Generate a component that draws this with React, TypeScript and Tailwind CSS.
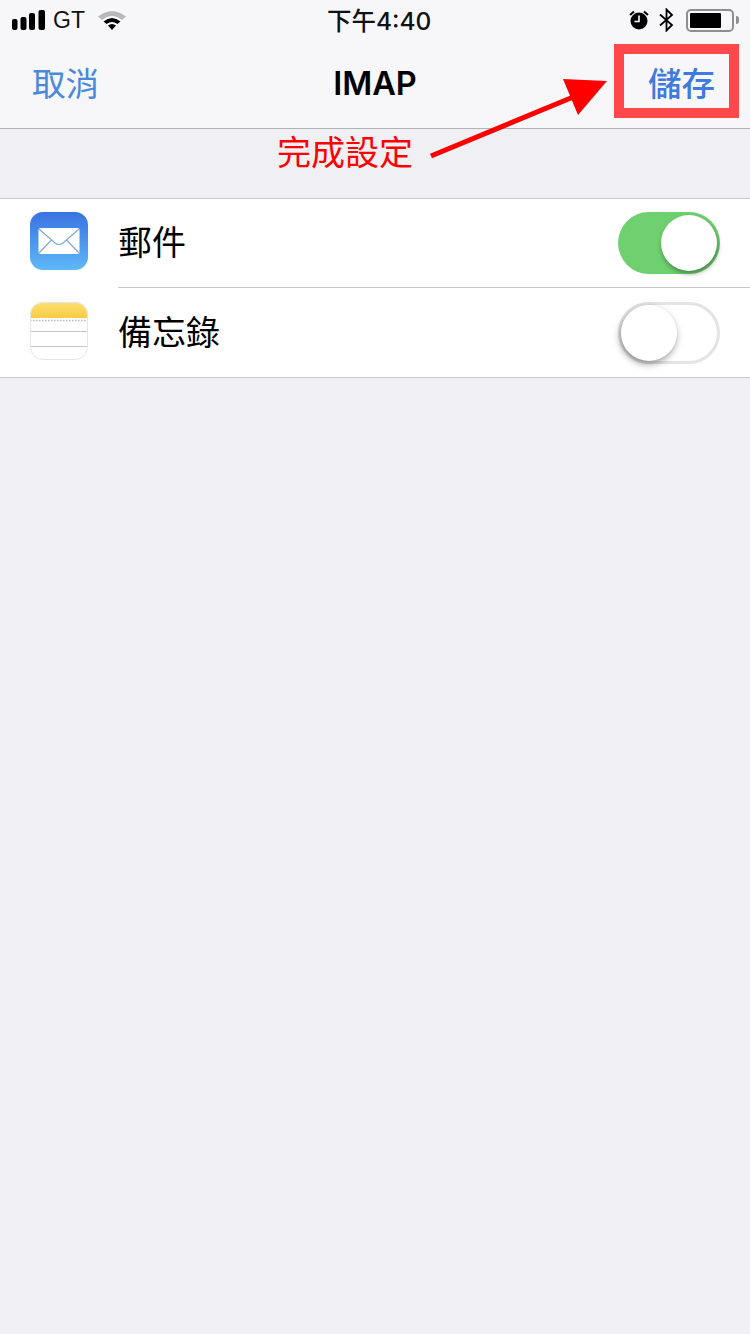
import React from "react";

const font = { fontFamily: '"Inter", "Noto Sans CJK TC", sans-serif' };

function Toggle({ on }: { on: boolean }) {
  return (
    <div
      className={
        on
          ? "relative h-[62px] w-[102px] rounded-full bg-[#6ed06f]"
          : "relative h-[62px] w-[102px] rounded-full border-[3px] border-[#e4e4e4] bg-white"
      }
    >
      <div
        className={
          on
            ? "absolute left-[43px] top-[3px] h-[56px] w-[56px] rounded-full bg-white shadow-[1px_3px_5px_rgba(0,0,0,0.35)]"
            : "absolute left-0 top-0 h-[56px] w-[56px] rounded-full bg-white shadow-[-1px_3px_7px_rgba(0,0,0,0.4)]"
        }
      />
    </div>
  );
}

function MailIcon() {
  return (
    <svg width="58" height="58" viewBox="0 0 58 58">
      <defs>
        <linearGradient id="mg" x1="0" y1="0" x2="0" y2="1">
          <stop offset="0" stopColor="#3a72e0" />
          <stop offset="1" stopColor="#5fb8f8" />
        </linearGradient>
      </defs>
      <rect width="58" height="58" rx="13" fill="url(#mg)" />
      <rect x="8.5" y="16" width="41" height="26" rx="2" fill="#fff" />
      <path d="M9 17 L25 31 Q29 34 33 31 L49 17 M9 41 L21.5 28 M49 41 L36.5 28" fill="none" stroke="#7fa9d8" strokeWidth="1.2" />
    </svg>
  );
}

function NotesIcon() {
  return (
    <svg width="58" height="58" viewBox="0 0 58 58">
      <defs>
        <linearGradient id="ng" x1="0" y1="0" x2="0" y2="1">
          <stop offset="0" stopColor="#fbdf70" />
          <stop offset="1" stopColor="#f8cc45" />
        </linearGradient>
        <clipPath id="nc">
          <rect width="58" height="58" rx="13" />
        </clipPath>
      </defs>
      <g clipPath="url(#nc)">
        <rect width="58" height="58" fill="#fff" />
        <rect width="58" height="16" fill="url(#ng)" />
        <line x1="0" y1="18.5" x2="58" y2="18.5" stroke="#b5b5b5" strokeWidth="1.5" strokeDasharray="1.5 1.5" />
        <line x1="0" y1="29.5" x2="58" y2="29.5" stroke="#c6c6c6" />
        <line x1="0" y1="44.5" x2="58" y2="44.5" stroke="#c6c6c6" />
      </g>
      <rect x="0.5" y="0.5" width="57" height="57" rx="12.5" fill="none" stroke="#e6e6e6" />
    </svg>
  );
}

export default function App() {
  return (
    <div className="relative flex min-h-[1334px] w-[750px] flex-col overflow-hidden bg-[#efeff4]" style={font}>
      <div className="flex h-[129px] flex-col border-b border-[#b2b2b6] bg-[#f7f7f9]">
        <div className="relative flex h-[40px] items-center justify-between pl-[12px] pr-[11px]">
          <div className="flex items-center">
            <svg width="33" height="20" viewBox="0 0 33 20">
              <rect x="0" y="9" width="5.5" height="11" rx="2" fill="#000" />
              <rect x="8.5" y="7" width="6" height="13" rx="2" fill="#000" />
              <rect x="17" y="3" width="6" height="17" rx="2" fill="#000" />
              <rect x="26.5" y="0" width="6.5" height="20" rx="2" fill="#000" />
            </svg>
            <span className="ml-[8px] text-[23px] leading-none text-[#111]" style={{ fontFamily: '"Liberation Sans", sans-serif' }}>GT</span>
            <svg className="ml-[13px]" width="28" height="20" viewBox="0 0 28 20">
              <path d="M0 6.5 Q14 -4 28 6.5 L24 10 Q14 2 4 10 Z" fill="#b8b8b8" />
              <path d="M5.5 11.5 Q14 4.5 22.5 11.5 L19.5 14 Q14 10 8.5 14 Z" fill="#000" />
              <path d="M10 15.5 Q14 12.5 18 15.5 L14 20 Z" fill="#000" />
            </svg>
          </div>
          <span className="absolute left-[327px] top-[3px] text-[24.5px] font-medium leading-[36px] text-[#111]">下午4:40</span>
          <div className="flex items-center">
            <svg width="20" height="20" viewBox="0 0 20 20">
              <circle cx="10" cy="11" r="8.5" fill="#000" />
              <path d="M10 5.5 V11.5 H5.5" fill="none" stroke="#fff" strokeWidth="1.6" />
              <path d="M1 5 L5 1.5 M19 5 L15 1.5" stroke="#000" strokeWidth="2" />
            </svg>
            <svg className="ml-[10px]" width="15" height="24" viewBox="0 0 15 24">
              <path d="M1 6.5 L13 17 L7.5 22.5 V1.5 L13 7 L1 17.5" fill="none" stroke="#000" strokeWidth="1.8" />
            </svg>
            <div className="ml-[12px] flex h-[23px] w-[48px] items-center rounded-[5px] border-2 border-[#8e8e8e] p-[2px]">
              <div className="h-full w-[31px] rounded-[1px] bg-black" />
            </div>
            <div className="ml-[2px] h-[8px] w-[3px] rounded-r-full bg-[#8e8e8e]" />
          </div>
        </div>
        <div className="relative flex flex-1 items-center justify-center">
          <span className="absolute left-[32px] top-[22px] text-[33.5px] leading-[44px] text-[#4a88dc]">取消</span>
          <span className="text-[32.5px] font-semibold leading-[44px] text-black">IMAP</span>
          <span className="absolute left-[648px] top-[22px] text-[33.5px] font-medium leading-[44px] text-[#3f7adf]">儲存</span>
        </div>
      </div>

      <div className="mt-[69px] border-y border-[#c8c8cc] bg-white">
        <div className="relative flex h-[89px] items-start pl-[30px] pr-[30px] pt-[13px]">
          <MailIcon />
          <span className="ml-[30px] mt-[14px] flex-1 text-[34px] leading-none text-black">郵件</span>
          <Toggle on />
          <div className="absolute bottom-0 left-[118px] right-0 h-px bg-[#c8c8cc]" />
        </div>
        <div className="flex h-[89px] items-start pl-[30px] pr-[30px] pt-[14px]">
          <NotesIcon />
          <span className="ml-[30px] mt-[14px] flex-1 text-[34px] leading-none text-black">備忘錄</span>
          <Toggle on={false} />
        </div>
      </div>

      <div className="absolute left-[614px] top-[44px] h-[74px] w-[125px] border-[10px] border-[#ff474c]" />
      <span className="absolute left-[277px] top-[130px] text-[34px] leading-[46px] text-[#ff0000]">完成設定</span>
      <svg className="absolute left-[425px] top-[70px]" width="190" height="95" viewBox="425 70 190 95">
        <line x1="431" y1="156" x2="578" y2="95" stroke="#ff0000" strokeWidth="5" />
        <polygon points="607,81 563,79 578,115" fill="#ff0000" />
      </svg>
    </div>
  );
}
